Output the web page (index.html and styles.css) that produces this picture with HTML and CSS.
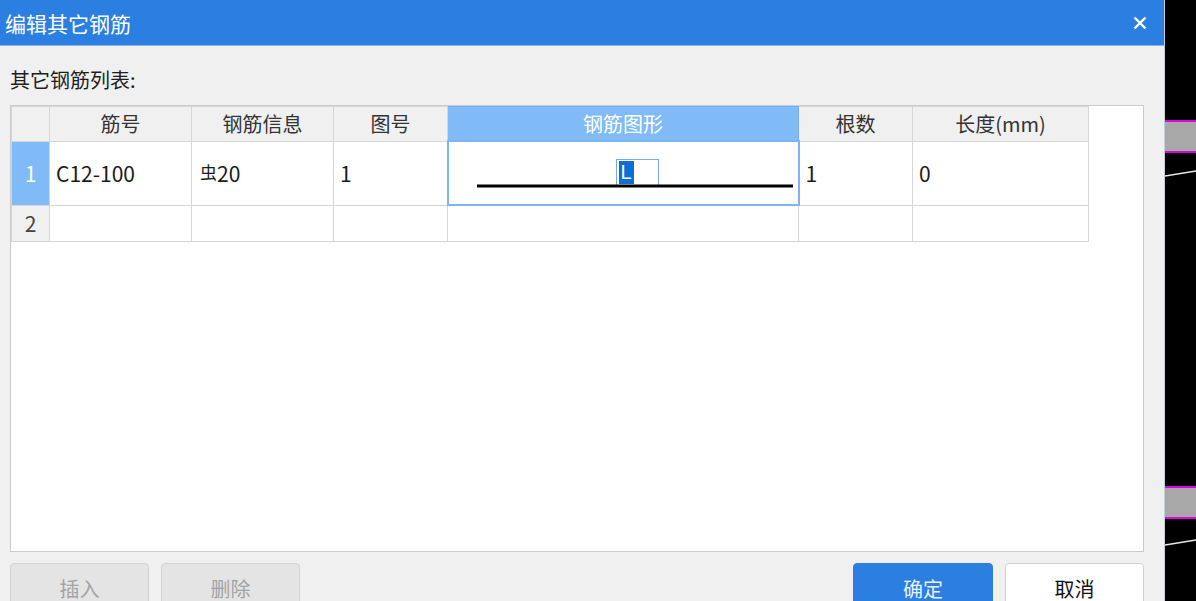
FILE: index.html
```html
<!DOCTYPE html>
<html lang="zh">
<head>
<meta charset="utf-8">
<title>编辑其它钢筋</title>
<link rel="stylesheet" href="styles.css">
</head>
<body>
<div class="screen">
  <div class="dialog">
    <div class="titlebar">
      <span class="title">编辑其它钢筋</span>
      <svg class="close" width="14" height="14" viewBox="0 0 14 14"><path d="M1.5 1.5 L12.5 12.5 M12.5 1.5 L1.5 12.5" stroke="#fff" stroke-width="2.4" fill="none"/></svg>
    </div>
    <div class="body">
      <div class="label">其它钢筋列表:</div>
      <div class="panel">
        <table class="grid">
          <colgroup>
            <col class="c-num"><col class="c-a"><col class="c-b"><col class="c-c"><col class="c-d"><col class="c-e"><col class="c-f">
          </colgroup>
          <thead>
            <tr class="head">
              <th class="corner"></th>
              <th>筋号</th>
              <th>钢筋信息</th>
              <th>图号</th>
              <th class="sel-head">钢筋图形</th>
              <th>根数</th>
              <th>长度(mm)</th>
            </tr>
          </thead>
          <tbody>
            <tr class="row1">
              <td class="rownum sel-num">1</td>
              <td>C12-100</td>
              <td class="info"><span class="grade">虫</span>20</td>
              <td>1</td>
              <td class="shape">
                <div class="shape-box">
                  <div class="editor"><span class="caret"></span><span class="hl">L</span></div>
                  <svg class="bar" width="316" height="4" viewBox="0 0 316 4"><line x1="0" y1="2" x2="316" y2="2" stroke="#000" stroke-width="3"/></svg>
                </div>
              </td>
              <td>1</td>
              <td>0</td>
            </tr>
            <tr class="row2">
              <td class="rownum">2</td>
              <td></td><td></td><td></td><td></td><td></td><td></td>
            </tr>
          </tbody>
        </table>
      </div>
      <div class="buttons">
        <div class="left">
          <button class="btn disabled">插入</button>
          <button class="btn disabled">删除</button>
        </div>
        <div class="right">
          <button class="btn primary">确定</button>
          <button class="btn plain">取消</button>
        </div>
      </div>
    </div>
  </div>
  <div class="canvas">
    <div class="band band1"></div>
    <div class="band band2"></div>
    <svg class="lines" width="31" height="601" viewBox="0 0 31 601">
      <line x1="0" y1="176" x2="31" y2="171" stroke="#e8e8e8" stroke-width="1.4"/>
      <line x1="0" y1="545" x2="31" y2="540" stroke="#e8e8e8" stroke-width="1.4"/>
    </svg>
  </div>
</div>
</body>
</html>
```

FILE: styles.css
```css
html, body {
  margin: 0;
  padding: 0;
  background: #000;
}
body {
  font-family: "Noto Sans CJK SC", "Noto Sans", sans-serif;
  color: #222;
  width: 1196px;
  height: 601px;
  overflow: hidden;
}
.screen {
  display: flex;
  width: 1196px;
  height: 601px;
}
.dialog {
  width: 1164px;
  height: 601px;
  background: #f0f0f0;
  border-right: 1px solid #c3cde0;
  display: flex;
  flex-direction: column;
}
.titlebar {
  height: 46px;
  background: #2b7fe0;
  border-bottom: 1px solid #8fb3e6;
  display: flex;
  align-items: center;
  justify-content: space-between;
  padding: 0 17px 0 5px;
  box-sizing: border-box;
}
.title {
  color: #fff;
  font-size: 21px;
  line-height: 46px;
}
.close { display: block; }
.body {
  flex: 1;
  padding: 0 20px 0 10px;
  display: flex;
  flex-direction: column;
}
.label {
  font-size: 20px;
  line-height: 24px;
  margin-top: 22px;
  color: #1e1e1e;
}
.panel {
  margin-top: 13px;
  height: 445px;
  background: #fff;
  border: 1px solid #cbcbcb;
}
.grid {
  border-collapse: collapse;
  table-layout: fixed;
  width: 1077px;
  margin-left: 0;
  font-size: 21px;
}
.c-num { width: 38px; }
.c-a { width: 142px; }
.c-b { width: 142px; }
.c-c { width: 114px; }
.c-d { width: 351px; }
.c-e { width: 114px; }
.c-f { width: 176px; }
.grid th, .grid td {
  border: 1px solid #d6d6d6;
  padding: 0;
}
.grid th {
  height: 33px;
  background: #f0f0f0;
  font-weight: normal;
  color: #333;
  text-align: center;
  font-size: 20px;
}
.grid th.sel-head {
  background: #80bbf7;
  color: #fff;
  border: 1px solid #73aef0;
}
.grid td {
  background: #fff;
  padding-left: 6px;
  color: #1a1a1a;
}
.row1 td { height: 62px; }
.row2 td { height: 35px; }
.grid td.rownum {
  background: #f0f0f0;
  text-align: center;
  padding-left: 0;
  color: #444;
}
.grid td.sel-num {
  background: #80bbf7;
  color: #fff;
}
.info {
  vertical-align: middle;
}
.info .grade {
  font-size: 17px;
  position: relative;
  top: -3px;
  margin-left: 2px;
  margin-right: 0;
}
.grid td.shape {
  border: 2px solid #7db4f1;
  padding: 0;
}
.shape-box {
  position: relative;
  height: 60px;
}
.bar {
  position: absolute;
  left: 28px;
  top: 41px;
}
.editor {
  position: absolute;
  left: 167px;
  top: 16px;
  width: 43px;
  height: 27px;
  border: 1px solid #7aa7ec;
  background: #fff;
  display: flex;
  align-items: stretch;
  padding: 1px;
  box-sizing: border-box;
}
.caret {
  width: 1px;
  background: #fff;
}
.hl {
  background: #0b6fd6;
  color: #fff;
  font-size: 20px;
  line-height: 23px;
  padding: 0 2px 0 2px;
  font-family: "Liberation Sans", sans-serif;
}
.buttons {
  margin-top: 11px;
  display: flex;
  justify-content: space-between;
}
.left, .right {
  display: flex;
  gap: 12px;
}
.btn {
  width: 139px;
  height: 46px;
  border-radius: 4px;
  font-family: "Noto Sans CJK SC", "Noto Sans", sans-serif;
  font-size: 20px;
  padding: 0;
  box-sizing: border-box;
  padding-top: 4px;
}
.btn.disabled {
  background: #e4e4e4;
  border: 1px solid #d3d3d3;
  color: #a3a3a3;
}
.btn.primary {
  background: #2b7fe0;
  border: 1px solid #2b7fe0;
  color: #e8f1fc;
  width: 140px;
}
.btn.plain {
  background: #fff;
  border: 1px solid #d0d0d0;
  color: #111;
}
.canvas {
  flex: 1;
  position: relative;
  background: #000;
}
.band {
  position: absolute;
  left: 0;
  right: 0;
  height: 29px;
  background: #a8a8a8;
  border-top: 2px solid #e000e6;
  border-bottom: 2px solid #e000e6;
}
.band1 { top: 120px; }
.band2 { top: 486px; }
.lines {
  position: absolute;
  left: 0;
  top: 0;
}
```
